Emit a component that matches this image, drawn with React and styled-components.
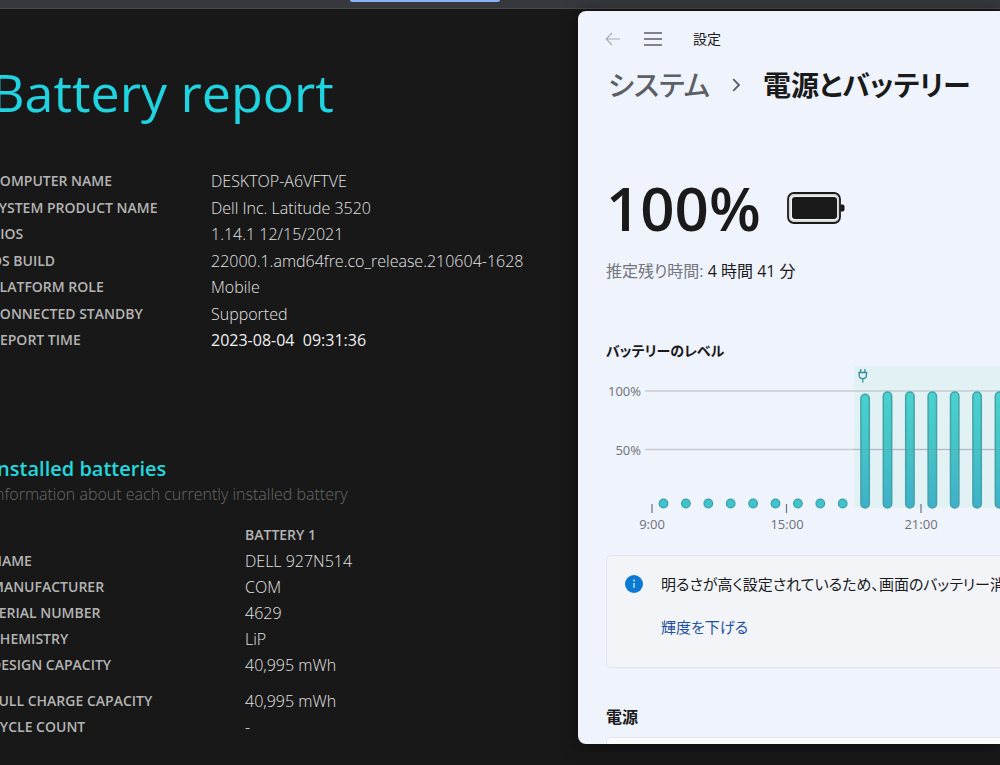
import React from "react";
import styled, { createGlobalStyle } from "styled-components";

const systemInfo = [
  ["COMPUTER NAME", "DESKTOP-A6VFTVE"],
  ["SYSTEM PRODUCT NAME", "Dell Inc. Latitude 3520"],
  ["BIOS", "1.14.1 12/15/2021"],
  ["OS BUILD", "22000.1.amd64fre.co_release.210604-1628"],
  ["PLATFORM ROLE", "Mobile"],
  ["CONNECTED STANDBY", "Supported"],
  ["REPORT TIME", "2023-08-04  09:31:36"],
];

const batteryInfo = [
  ["NAME", "DELL 927N514"],
  ["MANUFACTURER", "COM"],
  ["SERIAL NUMBER", "4629"],
  ["CHEMISTRY", "LiP"],
  ["DESIGN CAPACITY", "40,995 mWh"],
  ["FULL CHARGE CAPACITY", "40,995 mWh"],
  ["CYCLE COUNT", "-"],
];

// Battery level per hour, starting at 9:00
const levels = [0, 0, 0, 0, 0, 0, 0, 0, 0, 98, 100, 100, 100, 100, 100, 100, 100];

const BackIcon = () => (
  <svg width="16" height="14" viewBox="0 0 16 14" fill="none" stroke="#a9abb3" strokeWidth="1.2" aria-hidden="true">
    <path d="M7 1L1.2 7L7 13M1.2 7H15" />
  </svg>
);

const MenuIcon = () => (
  <svg width="18" height="14" viewBox="0 0 18 14" stroke="#5c5e68" strokeWidth="1.4" aria-hidden="true">
    <path d="M0 1H18M0 7H18M0 13H18" />
  </svg>
);

const ChevronIcon = () => (
  <svg width="9" height="14" viewBox="0 0 9 14" fill="none" stroke="#5a5c63" strokeWidth="1.8" aria-hidden="true">
    <path d="M1.2 1.2L7 7L1.2 12.8" />
  </svg>
);

const BatteryIcon = () => (
  <svg width="58" height="32" viewBox="0 0 58 32" aria-hidden="true">
    <rect x="1" y="1" width="52" height="30" rx="6" fill="#f1f4f6" stroke="#1a1a1a" strokeWidth="1.8" />
    <rect x="2.8" y="2.8" width="48.4" height="26.4" rx="4.5" fill="none" stroke="#c3c9c7" strokeWidth="1.2" />
    <rect x="5" y="5" width="45" height="22" rx="3" fill="#1a1a1a" />
    <path d="M53.5 12.5H55.5Q57.5 12.5 57.5 14.5V17.5Q57.5 19.5 55.5 19.5H53.5Z" fill="#1a1a1a" />
  </svg>
);

const InfoIcon = () => (
  <svg width="18" height="18" viewBox="0 0 18 18" aria-hidden="true">
    <circle cx="9" cy="9" r="9" fill="#0b7ad3" />
    <circle cx="9" cy="5.6" r="1" fill="#cfe6fa" />
    <path d="M9 8V12.8" stroke="#cfe6fa" strokeWidth="1.4" />
  </svg>
);

const LevelChart = () => (
  <Chart role="img" aria-label="バッテリーのレベル">
    <defs>
      <linearGradient id="level" gradientUnits="userSpaceOnUse" x1="0" y1="26" x2="0" y2="144">
        <stop offset="0" stopColor="#48d3cf" />
        <stop offset="0.5" stopColor="#46c3c6" />
        <stop offset="1" stopColor="#3eafca" />
      </linearGradient>
    </defs>
    <rect x="248" y="1" width="100%" height="142" fill="#e2f1f4" />
    <g stroke="#c8ccd3" strokeWidth="1.4">
      <line x1="39" y1="26" x2="100%" y2="26" />
      <line x1="39" y1="84.5" x2="100%" y2="84.5" />
    </g>
    <g stroke="#6d7077" strokeWidth="1.2">
      <line x1="46" y1="139" x2="46" y2="148" />
      <line x1="180.5" y1="139" x2="180.5" y2="148" />
      <line x1="315" y1="139" x2="315" y2="148" />
    </g>
    {levels.map((level, i) => {
      const x = 57.5 + i * 22.4;
      if (level === 0) {
        return <circle key={i} cx={x} cy="138.5" r="4.3" fill="#40c4cb" stroke="#389fa6" strokeWidth="1.2" />;
      }
      const top = 144 - level * 1.17;
      return (
        <rect key={i} x={x - 4.2} y={top} width="8.4" height={143 - top} rx="4.2" fill="url(#level)" stroke="#44a3a9" strokeWidth="1.5" />
      );
    })}
    <line x1="248" y1="84.5" x2="100%" y2="84.5" stroke="#5c8c96" strokeOpacity="0.25" />
    <g fill="none" stroke="#2f8f97" strokeWidth="1.3">
      <path d="M254.7 4V7.5M258.9 4V7.5M252.3 7.5H261.3M253.2 7.5V10.2Q253.2 13.6 256.8 13.6Q260.4 13.6 260.4 10.2V7.5M256.8 13.6V17.5" />
    </g>
    <AxisText x="35" y="31" textAnchor="end">100%</AxisText>
    <AxisText x="35" y="90" textAnchor="end">50%</AxisText>
    <AxisText x="46" y="164" textAnchor="middle">9:00</AxisText>
    <AxisText x="181" y="164" textAnchor="middle">15:00</AxisText>
    <AxisText x="315" y="164" textAnchor="middle">21:00</AxisText>
  </Chart>
);

export default function App() {
  return (
    <Desktop>
      <GlobalStyle />
      <BrowserBar>
        <ActiveTab />
      </BrowserBar>
      <Workspace>
        <Report>
          <ReportTitle>Battery report</ReportTitle>
          <SystemTable $labelWidth={220}>
            <tbody>
              {systemInfo.map(([label, value]) => (
                <tr key={label}>
                  <Label scope="row">{label}</Label>
                  <Value $strong={label === "REPORT TIME"}>{value}</Value>
                </tr>
              ))}
            </tbody>
          </SystemTable>
          <SectionTitle>Installed batteries</SectionTitle>
          <SectionNote>Information about each currently installed battery</SectionNote>
          <InfoTable $labelWidth={254}>
            <thead>
              <tr>
                <td />
                <Label scope="col">BATTERY 1</Label>
              </tr>
            </thead>
            <tbody>
              {batteryInfo.map(([label, value]) => (
                <InfoRow key={label} $spaced={label === "FULL CHARGE CAPACITY"}>
                  <Label scope="row">{label}</Label>
                  <Value>{value}</Value>
                </InfoRow>
              ))}
            </tbody>
          </InfoTable>
        </Report>
        <SettingsWindow>
          <TitleBar>
            <IconButton type="button" aria-label="戻る">
              <BackIcon />
            </IconButton>
            <IconButton type="button" aria-label="メニュー">
              <MenuIcon />
            </IconButton>
            <span>設定</span>
          </TitleBar>
          <Breadcrumb>
            <Parent href="#system">システム</Parent>
            <ChevronIcon />
            <Current>電源とバッテリー</Current>
          </Breadcrumb>
          <Charge>
            <Percent>100%</Percent>
            <BatteryIcon />
          </Charge>
          <Remaining>
            <span>推定残り時間:</span> 4 時間 41 分
          </Remaining>
          <Subheading>バッテリーのレベル</Subheading>
          <LevelChart />
          <Notice>
            <InfoIcon />
            <NoticeBody>
              <NoticeText>明るさが高く設定されているため、画面のバッテリー消費</NoticeText>
              <NoticeLink href="#brightness">輝度を下げる</NoticeLink>
            </NoticeBody>
          </Notice>
          <PowerHeading>電源</PowerHeading>
          <PowerCard />
        </SettingsWindow>
      </Workspace>
    </Desktop>
  );
}

// Styled-components
const GlobalStyle = createGlobalStyle`
  * {
    box-sizing: border-box;
  }

  body {
    margin: 0;
    background: #181818;
    font-family: "Open Sans", "Noto Sans CJK JP", sans-serif;
  }
`;

const Desktop = styled.div`
  display: flex;
  flex-direction: column;
  height: 100vh;
  overflow: hidden;
  background: #181818;
`;

const BrowserBar = styled.header`
  display: flex;
  flex: none;
  height: 9px;
  padding-left: 35%;
  background: #37383d;
  border-bottom: 1px solid #4a4a4a;
`;

const ActiveTab = styled.div`
  width: 150px;
  height: 2px;
  background: #8ab0f5;
  border-radius: 0 0 4px 4px;
`;

const Workspace = styled.main`
  display: grid;
  grid-template-columns: 578fr 422fr;
  flex: 1;
  min-height: 0;
`;

const Report = styled.section`
  min-width: 0;
  margin-left: -9px;
  padding-top: 43px;
  overflow: hidden;
  white-space: nowrap;
`;

const ReportTitle = styled.h1`
  margin: 0 0 36px;
  color: #1fd3e0;
  font-size: 52px;
  font-weight: 400;
  line-height: 80px;
`;

const InfoTable = styled.table`
  border-collapse: collapse;

  td,
  th {
    height: 26px;
    padding: 0;
    line-height: 26px;
    text-align: left;
    vertical-align: bottom;
  }

  tr > :first-child {
    width: ${(p) => p.$labelWidth}px;
  }
`;

const SystemTable = styled(InfoTable)`
  height: 185px;
`;

const InfoRow = styled.tr`
  && > * {
    height: ${(p) => (p.$spaced ? 36 : 26)}px;
  }
`;

const Label = styled.th`
  color: #b4b4b4;
  font-size: 14px;
  font-weight: 600;
`;

const Value = styled.td`
  color: ${(p) => (p.$strong ? "#f0f0f0" : "#e4e4e4")};
  font-size: 16px;
  font-weight: ${(p) => (p.$strong ? 400 : 300)};
  white-space: pre;
`;

const SectionTitle = styled.h2`
  margin: 102px 0 0;
  color: #22d8dd;
  font-size: 20px;
  font-weight: 600;
  line-height: 28px;
`;

const SectionNote = styled.p`
  margin: 0 0 17px;
  color: #6a6a6a;
  font-size: 16px;
  font-weight: 300;
  line-height: 22px;
`;

const SettingsWindow = styled.section`
  display: flex;
  flex-direction: column;
  min-width: 0;
  margin: 2px 0 21px;
  padding-left: 28px;
  overflow: hidden;
  color: #1a1a1a;
  background: #eff3fb;
  border-radius: 8px 0 0 8px;
  box-shadow: 0 2px 16px rgba(0, 0, 0, 0.5);
  font-feature-settings: "palt";
  white-space: nowrap;

  & > * {
    flex: none;
  }
`;

const TitleBar = styled.header`
  display: flex;
  align-items: center;
  height: 56px;
  margin-left: -9px;
  font-size: 14px;
  line-height: 18px;

  span {
    margin-left: 24px;
  }
`;

const IconButton = styled.button`
  display: flex;
  align-items: center;
  justify-content: center;
  width: 32px;
  height: 32px;
  padding: 0;
  background: none;
  border: 0;

  & + & {
    margin-left: 16px;
  }

  &:first-child {
    margin-right: -8px;
  }
`;

const Breadcrumb = styled.nav`
  display: flex;
  align-items: center;
  gap: 22px;
  height: 36px;
  padding-left: 2px;
  font-size: 28px;
  line-height: 36px;
`;

const Parent = styled.a`
  color: #5d5f66;
  font-weight: 500;
  text-decoration: none;
`;

const Current = styled.h2`
  margin: 0;
  font-size: 28px;
  font-weight: 600;
`;

const Charge = styled.div`
  display: flex;
  align-items: center;
  gap: 26px;
  height: 80px;
  margin-top: 65px;
`;

const Percent = styled.div`
  font-size: 60px;
  font-weight: 600;
  line-height: 78px;
`;

const Remaining = styled.p`
  margin: 11px 0 0;
  font-size: 16px;
  line-height: 24px;

  span {
    color: #74767d;
  }
`;

const Subheading = styled.h3`
  margin: 56px 0 0;
  font-size: 14px;
  font-weight: 600;
  line-height: 24px;
`;

const Chart = styled.svg`
  display: block;
  width: 100%;
  height: 176px;
  margin-top: 2px;
`;

const AxisText = styled.text`
  fill: #6e7178;
  font-size: 13px;
`;

const Notice = styled.aside`
  display: flex;
  gap: 18px;
  height: 113px;
  margin-top: 14px;
  padding: 19px 0 19px 18px;
  overflow: hidden;
  background: #f2f4f8;
  border: 1px solid #e0e4ea;
  border-right: 0;
  border-radius: 5px 0 0 5px;

  svg {
    flex: none;
  }
`;

const NoticeBody = styled.div`
  display: flex;
  flex-direction: column;
  align-items: flex-start;
  gap: 19px;
  margin-top: -3px;
`;

const NoticeText = styled.p`
  margin: 0;
  font-size: 15px;
  line-height: 24px;
`;

const NoticeLink = styled.a`
  color: #1f519c;
  font-size: 15px;
  line-height: 24px;
  text-decoration: none;
`;

const PowerHeading = styled.h3`
  margin: 37px 0 8px;
  font-size: 16px;
  font-weight: 600;
  line-height: 24px;
`;

const PowerCard = styled.div`
  height: 68px;
  background: #fafbfd;
  border: 1px solid #e3e6ec;
  border-right: 0;
  border-radius: 5px 0 0 0;
`;
